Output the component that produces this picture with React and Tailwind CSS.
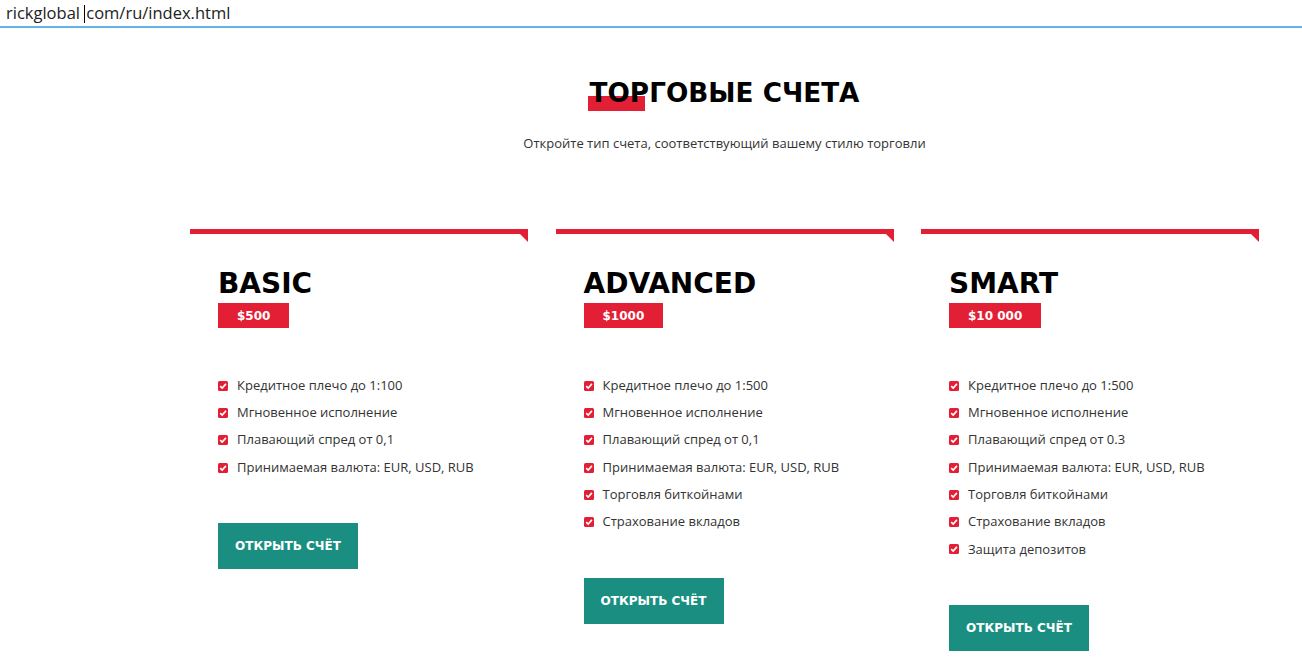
import React from "react";

const heading = { fontFamily: '"DejaVu Sans", "Liberation Sans", sans-serif' };
const body = { fontFamily: '"Open Sans", "Liberation Sans", sans-serif' };

const plans = [
  {
    name: "BASIC",
    price: "$500",
    features: [
      "Кредитное плечо до 1:100",
      "Мгновенное исполнение",
      "Плавающий спред от 0,1",
      "Принимаемая валюта: EUR, USD, RUB",
    ],
  },
  {
    name: "ADVANCED",
    price: "$1000",
    features: [
      "Кредитное плечо до 1:500",
      "Мгновенное исполнение",
      "Плавающий спред от 0,1",
      "Принимаемая валюта: EUR, USD, RUB",
      "Торговля биткойнами",
      "Страхование вкладов",
    ],
  },
  {
    name: "SMART",
    price: "$10 000",
    features: [
      "Кредитное плечо до 1:500",
      "Мгновенное исполнение",
      "Плавающий спред от 0.3",
      "Принимаемая валюта: EUR, USD, RUB",
      "Торговля биткойнами",
      "Страхование вкладов",
      "Защита депозитов",
    ],
  },
];

function CheckBox() {
  return (
    <svg width="10" height="10" viewBox="0 0 10 10" className="shrink-0">
      <rect x="0" y="0" width="10" height="10" rx="1.5" fill="#e21f35" />
      <path d="M2.2 5.2 L4.2 7.1 L7.9 2.9" fill="none" stroke="#fff" strokeWidth="1.6" />
    </svg>
  );
}

function PlanCard({ plan }) {
  return (
    <div className="relative">
      <div className="h-[5px] bg-[#e21f35]" />
      <svg width="10" height="10" viewBox="0 0 10 10" className="absolute right-0 top-[3px]">
        <polygon points="0,0 10,0 10,10" fill="#e21f35" />
      </svg>
      <div className="px-[28px]">
        <h3 className="mt-[36px] text-[28px] leading-[28px] font-bold text-black" style={heading}>
          {plan.name}
        </h3>
        <div
          className="mt-[5px] inline-flex h-[25px] items-center px-[19px] bg-[#e21f35] text-white text-[12px] font-bold"
          style={heading}
        >
          {plan.price}
        </div>
        <ul className="mt-[44px]">
          {plan.features.map((f) => (
            <li key={f} className="flex h-[27.3px] items-center gap-[9px] text-[13px] text-[#333]" style={body}>
              <CheckBox />
              <span>{f}</span>
            </li>
          ))}
        </ul>
        <button
          className="mt-[42px] h-[46px] w-[140px] bg-[#1a8f81] text-white text-[12px] font-bold"
          style={heading}
        >
          ОТКРЫТЬ СЧЁТ
        </button>
      </div>
    </div>
  );
}

export default function App() {
  return (
    <div className="min-h-screen bg-white">
      <div className="h-[28px] border-b-2 border-[#63b3e9] pl-[6px] flex items-center">
        <span className="text-[16.5px] leading-[20px] text-[#222]" style={body}>
          rickglobal <span className="inline-block w-px h-[18px] bg-black align-middle mr-[1px]" />com/ru/index.html
        </span>
      </div>
      <div className="ml-[190px] w-[1069px]">
        <h2
          className="mt-[52px] text-center text-[26.3px] leading-[26px] font-bold text-black"
          style={heading}
        >
          <span className="relative inline-block">
            <span className="absolute left-[-2px] w-[57px] top-[16px] h-[15px] bg-[#e21f35]" />
            <span className="relative">ТОР</span>
          </span>
          ГОВЫЕ СЧЕТА
        </h2>
        <p className="mt-[27px] text-center text-[13px] leading-[20px] text-[#333]" style={body}>
          Откройте тип счета, соответствующий вашему стилю торговли
        </p>
        <div className="mt-[76px] grid grid-cols-3 gap-[27.5px]">
          {plans.map((p) => (
            <PlanCard key={p.name} plan={p} />
          ))}
        </div>
      </div>
    </div>
  );
}
